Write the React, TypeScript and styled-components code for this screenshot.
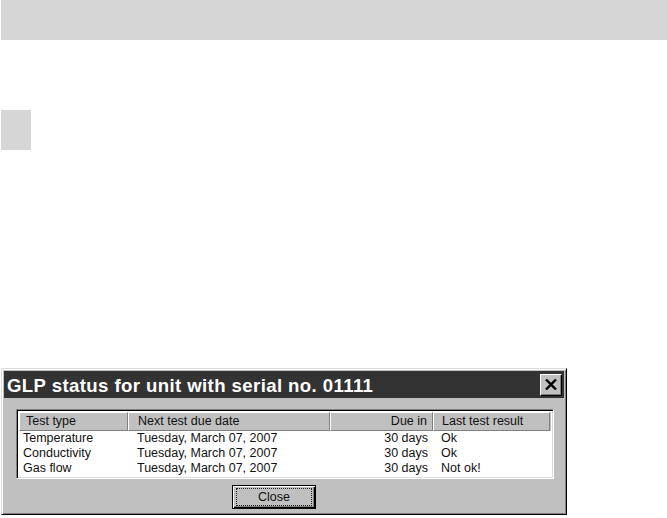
import React from "react";
import styled, { createGlobalStyle } from "styled-components";

const GlobalStyle = createGlobalStyle`
  body {
    margin: 0;
    background: #fff;
    font-family: "Liberation Sans", Arial, sans-serif;
  }
`;

const Page = styled.div`
  width: 667px;
  height: 518px;
  overflow: hidden;
`;

const TopBar = styled.div`
  margin-left: 1px;
  height: 40px;
  background: #d6d6d6;
`;

const Marker = styled.div`
  margin: 70px 0 0 1px;
  width: 30px;
  height: 40px;
  background: #d6d6d6;
`;

const Dialog = styled.div`
  margin: 218px 0 0 1px;
  width: 566px;
  height: 147px;
  box-sizing: border-box;
  background: #c0c0c0;
  border-top: 1px solid #dcdcdc;
  border-left: 1px solid #dcdcdc;
  border-right: 1px solid #000;
  border-bottom: 1px solid #000;
  box-shadow: inset 1px 1px #fff, inset -1px -1px #808080;
  padding: 2px;
  display: flex;
  flex-direction: column;
`;

const TitleBar = styled.div`
  height: 27px;
  background: #333;
  color: #fff;
  display: flex;
  align-items: center;
  justify-content: space-between;
  padding: 0 2px 0 3px;
`;

const Title = styled.span`
  font-size: 18.6px;
  font-weight: bold;
  letter-spacing: 0.4px;
  line-height: 27px;
  padding-top: 2px;
`;

const CloseX = styled.button`
  width: 22px;
  height: 22px;
  padding: 0;
  background: #c0c0c0;
  border-top: 1px solid #fff;
  border-left: 1px solid #fff;
  border-right: 1px solid #000;
  border-bottom: 1px solid #000;
  box-shadow: inset -1px -1px #808080;
  display: flex;
  align-items: center;
  justify-content: center;
`;

const Body = styled.div`
  padding: 11px 10px 0 12px;
  display: flex;
  flex-direction: column;
`;

const List = styled.div`
  width: 538px;
  box-sizing: border-box;
  border-top: 1px solid #808080;
  border-left: 1px solid #808080;
  border-right: 1px solid #fff;
  border-bottom: 1px solid #fff;
  box-shadow: inset 1px 1px #000, inset -1px -1px #dcdcdc;
  padding: 2px;
  background: #fff;
`;

const HeaderRow = styled.div`
  display: flex;
  height: 19px;
  background: #c0c0c0;
`;

const HeadCell = styled.div<{ $w: number; $right?: boolean; $pad: number }>`
  width: ${(p) => p.$w}px;
  box-sizing: border-box;
  font-size: 12.5px;
  line-height: 17px;
  color: #111;
  border-top: 1px solid #fff;
  border-left: 1px solid #fff;
  border-right: 1px solid #808080;
  border-bottom: 1px solid #808080;
  text-align: ${(p) => (p.$right ? "right" : "left")};
  padding: ${(p) => (p.$right ? `0 ${p.$pad}px 0 0` : `0 0 0 ${p.$pad}px`)};
  white-space: nowrap;
`;

const Row = styled.div`
  display: flex;
  height: 15px;
`;

const Cell = styled.div<{ $w: number; $right?: boolean; $pad: number }>`
  width: ${(p) => p.$w}px;
  box-sizing: border-box;
  font-size: 12.5px;
  line-height: 15px;
  color: #111;
  text-align: ${(p) => (p.$right ? "right" : "left")};
  padding: ${(p) => (p.$right ? `0 ${p.$pad}px 0 0` : `0 0 0 ${p.$pad}px`)};
  white-space: nowrap;
`;

const Footer = styled.div`
  padding: 6px 0 0 216px;
`;

const Button = styled.button`
  width: 84px;
  height: 24px;
  padding: 0;
  background: #c0c0c0;
  border: 1px solid #000;
  box-shadow: inset 1px 1px #fff, inset -1px -1px #000, inset -2px -2px #808080;
  font-family: "Liberation Sans", Arial, sans-serif;
  font-size: 12.5px;
  color: #111;
  display: flex;
  align-items: center;
  justify-content: center;
`;

const Focus = styled.span`
  width: 74px;
  height: 16px;
  border: 1px dotted #222;
  display: flex;
  align-items: center;
  justify-content: center;
`;

const columns = [
  { key: "type", label: "Test type", w: 109, pad: 6 },
  { key: "date", label: "Next test due date", w: 202, pad: 9 },
  { key: "due", label: "Due in", w: 103, pad: 5, right: true },
  { key: "result", label: "Last test result", w: 117, pad: 8 },
];

const rows = [
  { type: "Temperature", date: "Tuesday, March 07, 2007", due: "30 days", result: "Ok" },
  { type: "Conductivity", date: "Tuesday, March 07, 2007", due: "30 days", result: "Ok" },
  { type: "Gas flow", date: "Tuesday, March 07, 2007", due: "30 days", result: "Not ok!" },
];

export default function App() {
  return (
    <Page>
      <GlobalStyle />
      <TopBar />
      <Marker />
      <Dialog>
        <TitleBar>
          <Title>GLP status for unit with serial no. 01111</Title>
          <CloseX aria-label="Close">
            <svg width="12" height="11" viewBox="0 0 12 11">
              <path d="M1 0.5 L11 10.5 M11 0.5 L1 10.5" stroke="#000" strokeWidth="2.4" />
            </svg>
          </CloseX>
        </TitleBar>
        <Body>
          <List>
            <HeaderRow>
              {columns.map((c) => (
                <HeadCell key={c.key} $w={c.w} $pad={c.pad} $right={c.right}>
                  {c.label}
                </HeadCell>
              ))}
            </HeaderRow>
            {rows.map((r) => (
              <Row key={r.type}>
                {columns.map((c) => (
                  <Cell key={c.key} $w={c.w} $pad={c.key === "type" ? 4 : c.pad} $right={c.right}>
                    {r[c.key as keyof typeof r]}
                  </Cell>
                ))}
              </Row>
            ))}
          </List>
          <Footer>
            <Button>
              <Focus>Close</Focus>
            </Button>
          </Footer>
        </Body>
      </Dialog>
    </Page>
  );
}
